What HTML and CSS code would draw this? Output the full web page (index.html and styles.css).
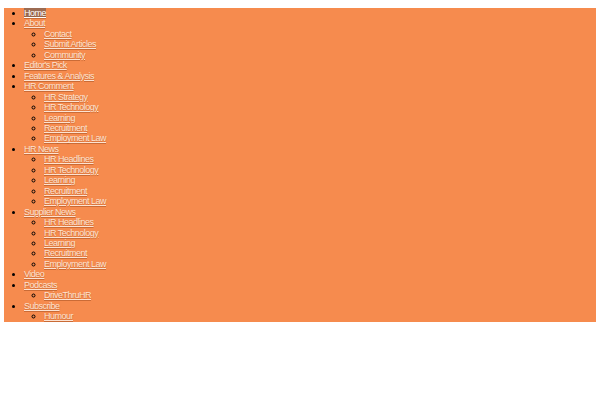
FILE: index.html
```html
<!DOCTYPE html>
<html>
<head>
<meta charset="utf-8">
<link rel="stylesheet" href="styles.css">
</head>
<body>
<ul class="menu">
  <li><a class="current" href="#">Home</a></li>
  <li><a href="#">About</a>
    <ul>
      <li><a href="#">Contact</a></li>
      <li><a href="#">Submit Articles</a></li>
      <li><a href="#">Community</a></li>
    </ul>
  </li>
  <li><a href="#">Editor's Pick</a></li>
  <li><a href="#">Features &amp; Analysis</a></li>
  <li><a href="#">HR Comment</a>
    <ul>
      <li><a href="#">HR Strategy</a></li>
      <li><a href="#">HR Technology</a></li>
      <li><a href="#">Learning</a></li>
      <li><a href="#">Recruitment</a></li>
      <li><a href="#">Employment Law</a></li>
    </ul>
  </li>
  <li><a href="#">HR News</a>
    <ul>
      <li><a href="#">HR Headlines</a></li>
      <li><a href="#">HR Technology</a></li>
      <li><a href="#">Learning</a></li>
      <li><a href="#">Recruitment</a></li>
      <li><a href="#">Employment Law</a></li>
    </ul>
  </li>
  <li><a href="#">Supplier News</a>
    <ul>
      <li><a href="#">HR Headlines</a></li>
      <li><a href="#">HR Technology</a></li>
      <li><a href="#">Learning</a></li>
      <li><a href="#">Recruitment</a></li>
      <li><a href="#">Employment Law</a></li>
    </ul>
  </li>
  <li><a href="#">Video</a></li>
  <li><a href="#">Podcasts</a>
    <ul>
      <li><a href="#">DriveThruHR</a></li>
    </ul>
  </li>
  <li><a href="#">Subscribe</a>
    <ul>
      <li><a href="#">Humour</a></li>
    </ul>
  </li>
</ul>
</body>
</html>
```
FILE: styles.css
```css
html, body {
  margin: 0;
  padding: 0;
  background: #ffffff;
}
body {
  padding-top: 8px;
  font-family: "Liberation Sans", Arial, sans-serif;
  font-size: 9px;
  line-height: 10.45px;
  letter-spacing: -0.5px;
}
.menu {
  margin: 0 4px;
  padding: 0 0 0 20px;
  background: #f68b4e;
  list-style: disc;
  color: #000;
}
.menu ul {
  margin: 0;
  padding: 0 0 0 20px;
  list-style: circle;
}
.menu a {
  color: #fde3d2;
  text-decoration: underline;
  text-shadow: 0 1px 1px rgba(120, 50, 10, 0.35);
}
.menu a.current {
  background: #9c6b52;
  color: #ffffff;
}
```
